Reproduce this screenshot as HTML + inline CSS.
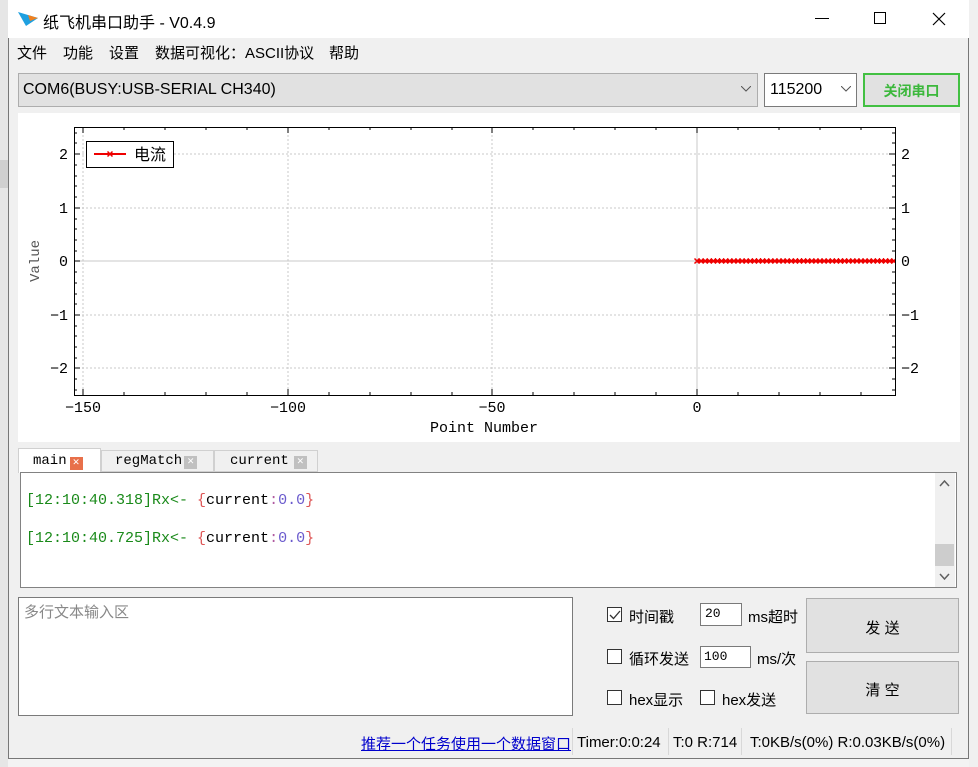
<!DOCTYPE html>
<html><head><meta charset="utf-8"><style>
*{margin:0;padding:0;box-sizing:border-box}
body{width:978px;height:767px;background:#f3f3f3;position:relative;overflow:hidden;font-family:"Liberation Sans","Noto Sans CJK SC",sans-serif;font-size:15px;color:#000}
.a{position:absolute}
.mono{font-family:"Liberation Mono","Noto Sans CJK SC",monospace}
.cb{position:absolute;width:15px;height:15px;border:1px solid #333;background:#fff}
.btn{position:absolute;background:#e1e1e1;border:1px solid #adadad;text-align:center;font-size:15px}
</style></head><body>
<div class="a" style="left:0;top:0;width:8px;height:767px;background:#e6e6e6"></div>
<div class="a" style="left:0;top:160px;width:8px;height:28px;background:#d0d0d0"></div>
<div class="a" style="left:969px;top:0;width:9px;height:767px;background:#f0f0f0"></div>
<div class="a" style="left:8px;top:0;width:961px;height:759px;background:#f0f0f0;border:1px solid #777;border-top:none"></div>
<!-- title -->
<div class="a" style="left:8px;top:0;width:961px;height:38px;background:#fff"></div>
<svg class="a" style="left:18px;top:12px" width="20" height="14"><polygon points="0,0 20,6 8,14" fill="#1ea0e0"/><polygon points="10,3 20,6 12,9" fill="#f08020"/></svg>
<div class="a" style="left:43px;top:9px;font-size:16px">纸飞机串口助手 - V0.4.9</div>
<div class="a" style="left:815px;top:18px;width:14px;height:1px;background:#000"></div>
<div class="a" style="left:874px;top:12px;width:12px;height:12px;border:1px solid #000"></div>
<svg class="a" style="left:932px;top:12px" width="14" height="14"><path d="M1 1L13 13M13 1L1 13" stroke="#000" stroke-width="1.2"/></svg>
<!-- menu -->
<div class="a" style="left:17px;top:42px">文件</div>
<div class="a" style="left:63px;top:42px">功能</div>
<div class="a" style="left:109px;top:42px">设置</div>
<div class="a" style="left:155px;top:42px">数据可视化：ASCII协议</div>
<div class="a" style="left:329px;top:42px">帮助</div>
<!-- port -->
<div class="a" style="left:18px;top:73px;width:740px;height:34px;background:#e1e1e1;border:1px solid #adadad;padding:7px 4px;font-size:16px">COM6(BUSY:USB-SERIAL CH340)</div>
<svg class="a" style="left:741px;top:86px" width="10" height="6"><path d="M0 0L5 5L10 0" fill="none" stroke="#555"/></svg>
<div class="a" style="left:764px;top:73px;width:93px;height:34px;background:#fff;border:1px solid #7a7a7a;padding:7px 5px;font-size:16px">115200</div>
<svg class="a" style="left:841px;top:86px" width="10" height="6"><path d="M0 0L5 5L10 0" fill="none" stroke="#555"/></svg>
<div class="a" style="left:863px;top:73px;width:97px;height:34px;background:#e1e1e1;border:2px solid #42c042;color:#3cb83c;text-align:center;padding-top:6px;font-size:14px;font-weight:bold">关闭串口</div>
<!-- plot -->
<svg class="a" style="left:18px;top:113px" width="942" height="329" font-family="Liberation Mono,monospace">
<defs><clipPath id="cp"><rect x="690" y="250" width="205" height="22"/></clipPath></defs>
<rect width="942" height="329" fill="#fff"/>
<g transform="translate(-18,-113)">
<g stroke="#c8c8c8" stroke-dasharray="2,2">
<line x1="83" y1="127" x2="83" y2="395"/><line x1="288" y1="127" x2="288" y2="395"/><line x1="492" y1="127" x2="492" y2="395"/>
<line x1="74" y1="154" x2="895" y2="154"/><line x1="74" y1="208" x2="895" y2="208"/><line x1="74" y1="315" x2="895" y2="315"/><line x1="74" y1="368" x2="895" y2="368"/>
</g>
<line x1="697" y1="127" x2="697" y2="395" stroke="#c8c8c8"/>
<line x1="74" y1="261" x2="895" y2="261" stroke="#c8c8c8"/>
<rect x="74.5" y="127.5" width="821" height="268" fill="none" stroke="#000"/>
<g stroke="#000">
<path d="M83 395v-6M288 395v-6M492 395v-6M697 395v-6M83 127v6M288 127v6M492 127v6M697 127v6"/>
<path d="M124 395v-3M165 395v-3M206 395v-3M247 395v-3M329 395v-3M370 395v-3M411 395v-3M452 395v-3M533 395v-3M574 395v-3M615 395v-3M656 395v-3M738 395v-3M779 395v-3M820 395v-3M861 395v-3"/>
<path d="M124 127v3M165 127v3M206 127v3M247 127v3M329 127v3M370 127v3M411 127v3M452 127v3M533 127v3M574 127v3M615 127v3M656 127v3M738 127v3M779 127v3M820 127v3M861 127v3"/>
<path d="M74 154h6M74 208h6M74 261h6M74 315h6M74 368h6M895 154h-6M895 208h-6M895 261h-6M895 315h-6M895 368h-6"/>
<path d="M74 143h3M74 165h3M74 176h3M74 186h3M74 197h3M74 219h3M74 229h3M74 240h3M74 251h3M74 272h3M74 283h3M74 294h3M74 304h3M74 326h3M74 336h3M74 347h3M74 358h3M74 379h3M74 390h3M74 133h3"/>
<path d="M895 143h-3M895 165h-3M895 176h-3M895 186h-3M895 197h-3M895 219h-3M895 229h-3M895 240h-3M895 251h-3M895 272h-3M895 283h-3M895 294h-3M895 304h-3M895 326h-3M895 336h-3M895 347h-3M895 358h-3M895 379h-3M895 390h-3M895 133h-3"/>
</g>
<g font-size="15" fill="#000" text-anchor="end">
<text x="68" y="159">2</text><text x="68" y="213">1</text><text x="68" y="266">0</text><text x="68" y="320">−1</text><text x="68" y="373">−2</text>
</g>
<g font-size="15" fill="#000">
<text x="901" y="159">2</text><text x="901" y="213">1</text><text x="901" y="266">0</text><text x="901" y="320">−1</text><text x="901" y="373">−2</text>
</g>
<g font-size="15" fill="#000" text-anchor="middle">
<text x="83" y="412">−150</text><text x="288" y="412">−100</text><text x="492" y="412">−50</text><text x="697" y="412">0</text>
<text x="484" y="432">Point Number</text>
</g>
<text transform="translate(39,261) rotate(-90)" font-size="14" fill="#555" text-anchor="middle">Value</text>
<g clip-path="url(#cp)">
<line x1="697" y1="261" x2="895" y2="261" stroke="#e00" stroke-width="2"/>
<path id="mk" stroke="#e00" stroke-width="1.5" d="M697 261m-2.5-2.5l5 5m0-5l-5 5m4.1-5l5 5m0-5l-5 5m4.1-5l5 5m0-5l-5 5m4.1-5l5 5m0-5l-5 5m4.1-5l5 5m0-5l-5 5m4.1-5l5 5m0-5l-5 5m4.1-5l5 5m0-5l-5 5m4.1-5l5 5m0-5l-5 5m4.1-5l5 5m0-5l-5 5m4.1-5l5 5m0-5l-5 5m4.1-5l5 5m0-5l-5 5m4.1-5l5 5m0-5l-5 5"/>
<use href="#mk" x="49.2"/><use href="#mk" x="98.4"/><use href="#mk" x="147.6"/><use href="#mk" x="196.8"/>
</g>
<rect x="86.5" y="141.5" width="87" height="26" fill="#fff" stroke="#000"/>
<line x1="94" y1="154" x2="126" y2="154" stroke="#e00" stroke-width="2"/>
<path d="M107.5 151.5l5 5m0-5l-5 5" stroke="#e00" stroke-width="1.5"/>
<text x="134" y="160" font-size="16" font-family="Liberation Sans,Noto Sans CJK SC,sans-serif">电流</text>
</g>
</svg>
<!-- tabs -->
<div class="a mono" style="left:18px;top:448px;width:83px;height:25px;background:#fff;border:1px solid #d0d0d0;border-bottom:none;font-size:14px;padding:4px 0 0 14px">main<span style="display:inline-block;width:13px;height:13px;background:#e8704a;color:#fff;font-size:11px;line-height:13px;text-align:center;margin-left:3px;vertical-align:-1px">✕</span></div>
<div class="a mono" style="left:101px;top:450px;width:113px;height:22px;background:#f0f0f0;border:1px solid #d0d0d0;font-size:14px;padding:2px 0 0 13px">regMatch<span style="display:inline-block;width:13px;height:13px;background:#c0c0c0;color:#fff;font-size:11px;line-height:13px;text-align:center;margin-left:2px">✕</span></div>
<div class="a mono" style="left:214px;top:450px;width:104px;height:22px;background:#f0f0f0;border:1px solid #d0d0d0;font-size:14px;padding:2px 0 0 15px">current<span style="display:inline-block;width:13px;height:13px;background:#c0c0c0;color:#fff;font-size:11px;line-height:13px;text-align:center;margin-left:5px">✕</span></div>
<div class="a" style="left:20px;top:472px;width:937px;height:116px;background:#fff;border:1px solid #828282"></div>
<div class="a" style="left:935px;top:473px;width:20px;height:114px;background:#f0f0f0"></div>
<div class="a" style="left:935px;top:544px;width:19px;height:22px;background:#cdcdcd"></div>
<svg class="a" style="left:939px;top:480px" width="11" height="7"><path d="M1 6L5.5 1L10 6" fill="none" stroke="#606060" stroke-width="1.5"/></svg>
<svg class="a" style="left:939px;top:573px" width="11" height="7"><path d="M1 1L5.5 6L10 1" fill="none" stroke="#606060" stroke-width="1.5"/></svg>
<div class="a mono" style="left:26px;top:492px;font-size:15px;color:#1a8a1a">[12:10:40.318]Rx&lt;- <span style="color:#d55">{</span><span style="color:#000">current</span><span style="color:#b05aa0">:</span><span style="color:#6a5acd">0.0</span><span style="color:#d55">}</span></div>
<div class="a mono" style="left:26px;top:530px;font-size:15px;color:#1a8a1a">[12:10:40.725]Rx&lt;- <span style="color:#d55">{</span><span style="color:#000">current</span><span style="color:#b05aa0">:</span><span style="color:#6a5acd">0.0</span><span style="color:#d55">}</span></div>
<!-- input -->
<div class="a" style="left:18px;top:597px;width:555px;height:119px;background:#fff;border:1px solid #7a7a7a;padding:3px 5px;color:#888;font-size:15px">多行文本输入区</div>
<div class="cb" style="left:607px;top:607px"></div>
<svg class="a" style="left:609px;top:610px" width="12" height="10"><path d="M1 5L4.5 8.5L11 1" fill="none" stroke="#333" stroke-width="1.3"/></svg>
<div class="a" style="left:629px;top:606px">时间戳</div>
<div class="a mono" style="left:700px;top:603px;width:42px;height:23px;background:#fff;border:1px solid #7a7a7a;padding:2px 4px;font-size:13px">20</div>
<div class="a" style="left:748px;top:606px">ms超时</div>
<div class="cb" style="left:607px;top:649px"></div>
<div class="a" style="left:629px;top:648px">循环发送</div>
<div class="a mono" style="left:700px;top:646px;width:51px;height:22px;background:#fff;border:1px solid #7a7a7a;padding:2px 3px;font-size:13px">100</div>
<div class="a" style="left:757px;top:648px">ms/次</div>
<div class="cb" style="left:607px;top:690px"></div>
<div class="a" style="left:629px;top:689px">hex显示</div>
<div class="cb" style="left:700px;top:690px"></div>
<div class="a" style="left:722px;top:689px">hex发送</div>
<div class="btn" style="left:806px;top:598px;width:153px;height:55px;padding-top:18px">发 送</div>
<div class="btn" style="left:806px;top:661px;width:153px;height:53px;padding-top:17px">清 空</div>
<!-- status -->
<div class="a" style="left:361px;top:733px;color:#00c;text-decoration:underline">推荐一个任务使用一个数据窗口</div>
<div class="a" style="left:572px;top:728px;width:1px;height:27px;background:#d8d8d8"></div>
<div class="a" style="left:577px;top:734px">Timer:0:0:24</div>
<div class="a" style="left:668px;top:728px;width:1px;height:27px;background:#d8d8d8"></div>
<div class="a" style="left:673px;top:734px">T:0 R:714</div>
<div class="a" style="left:741px;top:728px;width:1px;height:27px;background:#d8d8d8"></div>
<div class="a" style="left:750px;top:734px">T:0KB/s(0%) R:0.03KB/s(0%)</div>
<div class="a" style="left:951px;top:728px;width:1px;height:27px;background:#d8d8d8"></div>
</body></html>
